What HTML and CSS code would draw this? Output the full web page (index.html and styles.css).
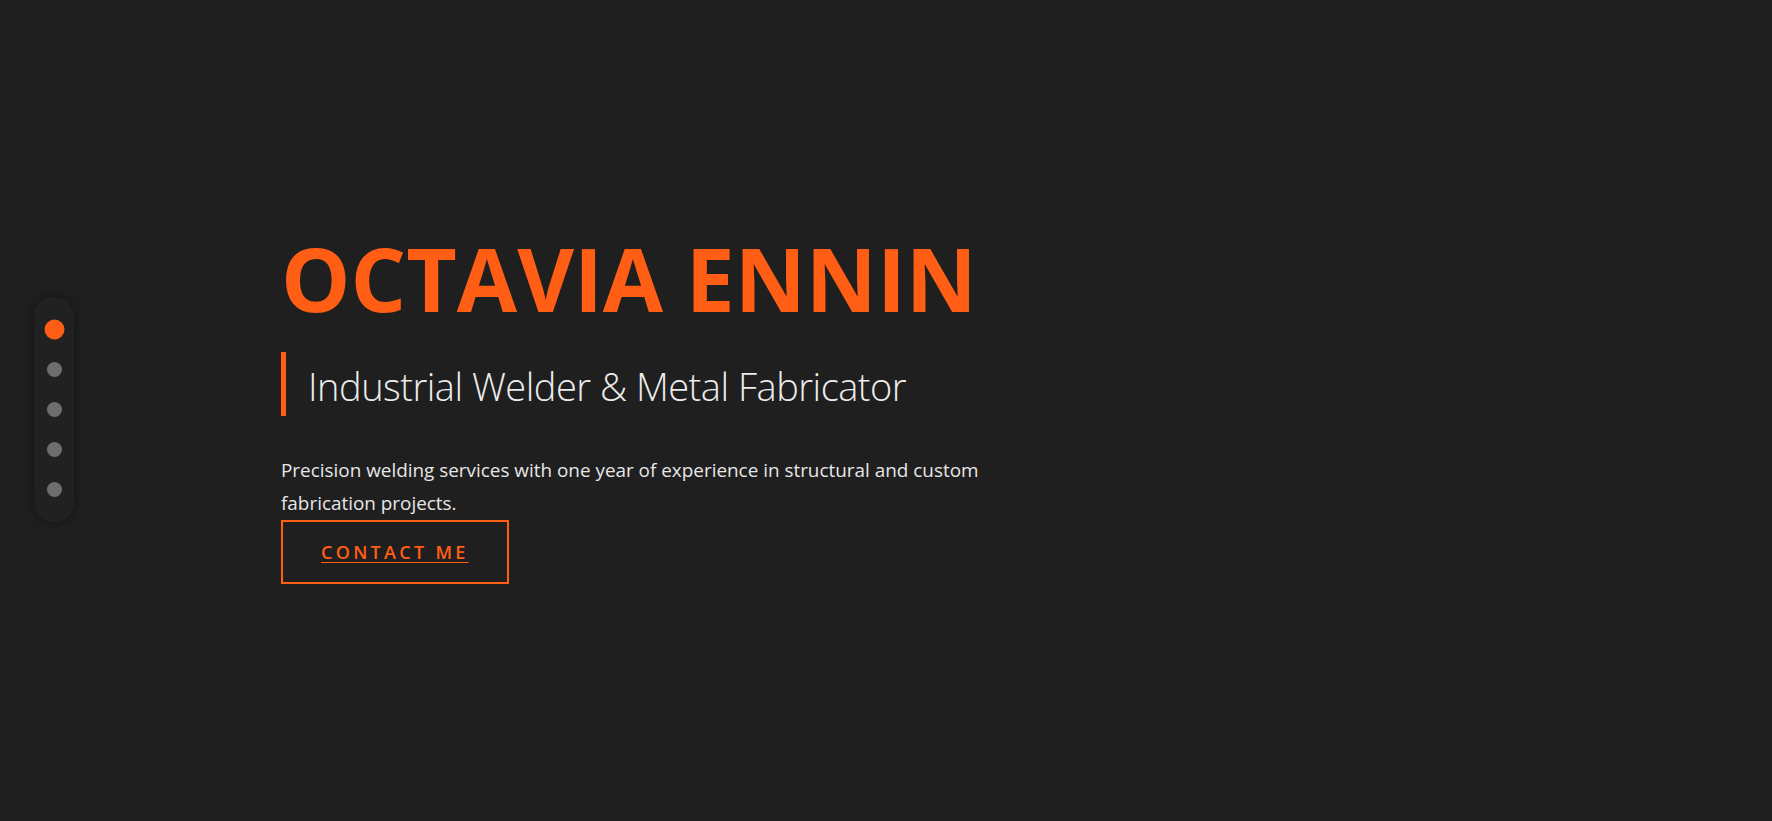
FILE: index.html
```html
<!DOCTYPE html>
<html lang="en">
<head>
<meta charset="utf-8">
<title>Octavia Ennin</title>
<link rel="stylesheet" href="styles.css">
</head>
<body>
<nav class="dots">
  <span class="dot active"></span>
  <span class="dot"></span>
  <span class="dot"></span>
  <span class="dot"></span>
  <span class="dot"></span>
</nav>
<main class="hero">
  <div class="hero-content">
    <h1 class="name">OCTAVIA ENNIN</h1>
    <h2 class="role">Industrial Welder &amp; Metal Fabricator</h2>
    <p class="intro">Precision welding services with one year of experience in structural and custom fabrication projects.</p>
    <a class="cta" href="#contact">CONTACT ME</a>
  </div>
</main>
</body>
</html>
```
FILE: styles.css
```css
* { box-sizing: border-box; }
html, body { margin: 0; padding: 0; }
body {
  background: #1f1f1f;
  font-family: "Open Sans", "Noto Sans", sans-serif;
  color: #e6e6e6;
  height: 821px;
  overflow: hidden;
}
.dots {
  position: fixed;
  left: 34px;
  top: 297px;
  width: 40px;
  padding: 25px 0;
  display: flex;
  flex-direction: column;
  align-items: center;
  gap: 25px;
  background: #212121;
  border-radius: 20px;
  box-shadow: 0 0 14px rgba(0,0,0,0.35);
}
.dot {
  width: 15px;
  height: 15px;
  border-radius: 50%;
  background: #6e6e6e;
}
.dot.active {
  background: #ff5e14;
  transform: scale(1.33);
}
.hero {
  height: 821px;
  padding: 226px 0 0 281px;
}
.hero-content {
  display: flex;
  flex-direction: column;
  align-items: flex-start;
}
.name {
  margin: 0 0 20px;
  font-size: 87.4px;
  line-height: 105.6px;
  font-weight: 700;
  color: #ff5e14;
}
.role {
  margin: 0 0 38px;
  border-left: 5px solid #ff5e14;
  padding: 4px 0 0 22px;
  font-size: 38px;
  line-height: 60px;
  letter-spacing: -0.5px;
  font-weight: 300;
  color: #ececec;
}
.intro {
  margin: 0;
  max-width: 700px;
  font-size: 18.9px;
  line-height: 33px;
  color: #e6e6e6;
}
.cta {
  display: inline-block;
  border: 2px solid #ff5e14;
  padding: 16px 38px;
  font-size: 18px;
  line-height: 28px;
  letter-spacing: 3.3px;
  color: #ff5e14;
  font-weight: 600;
  text-decoration: underline;
  text-underline-offset: 3px;
}
```
